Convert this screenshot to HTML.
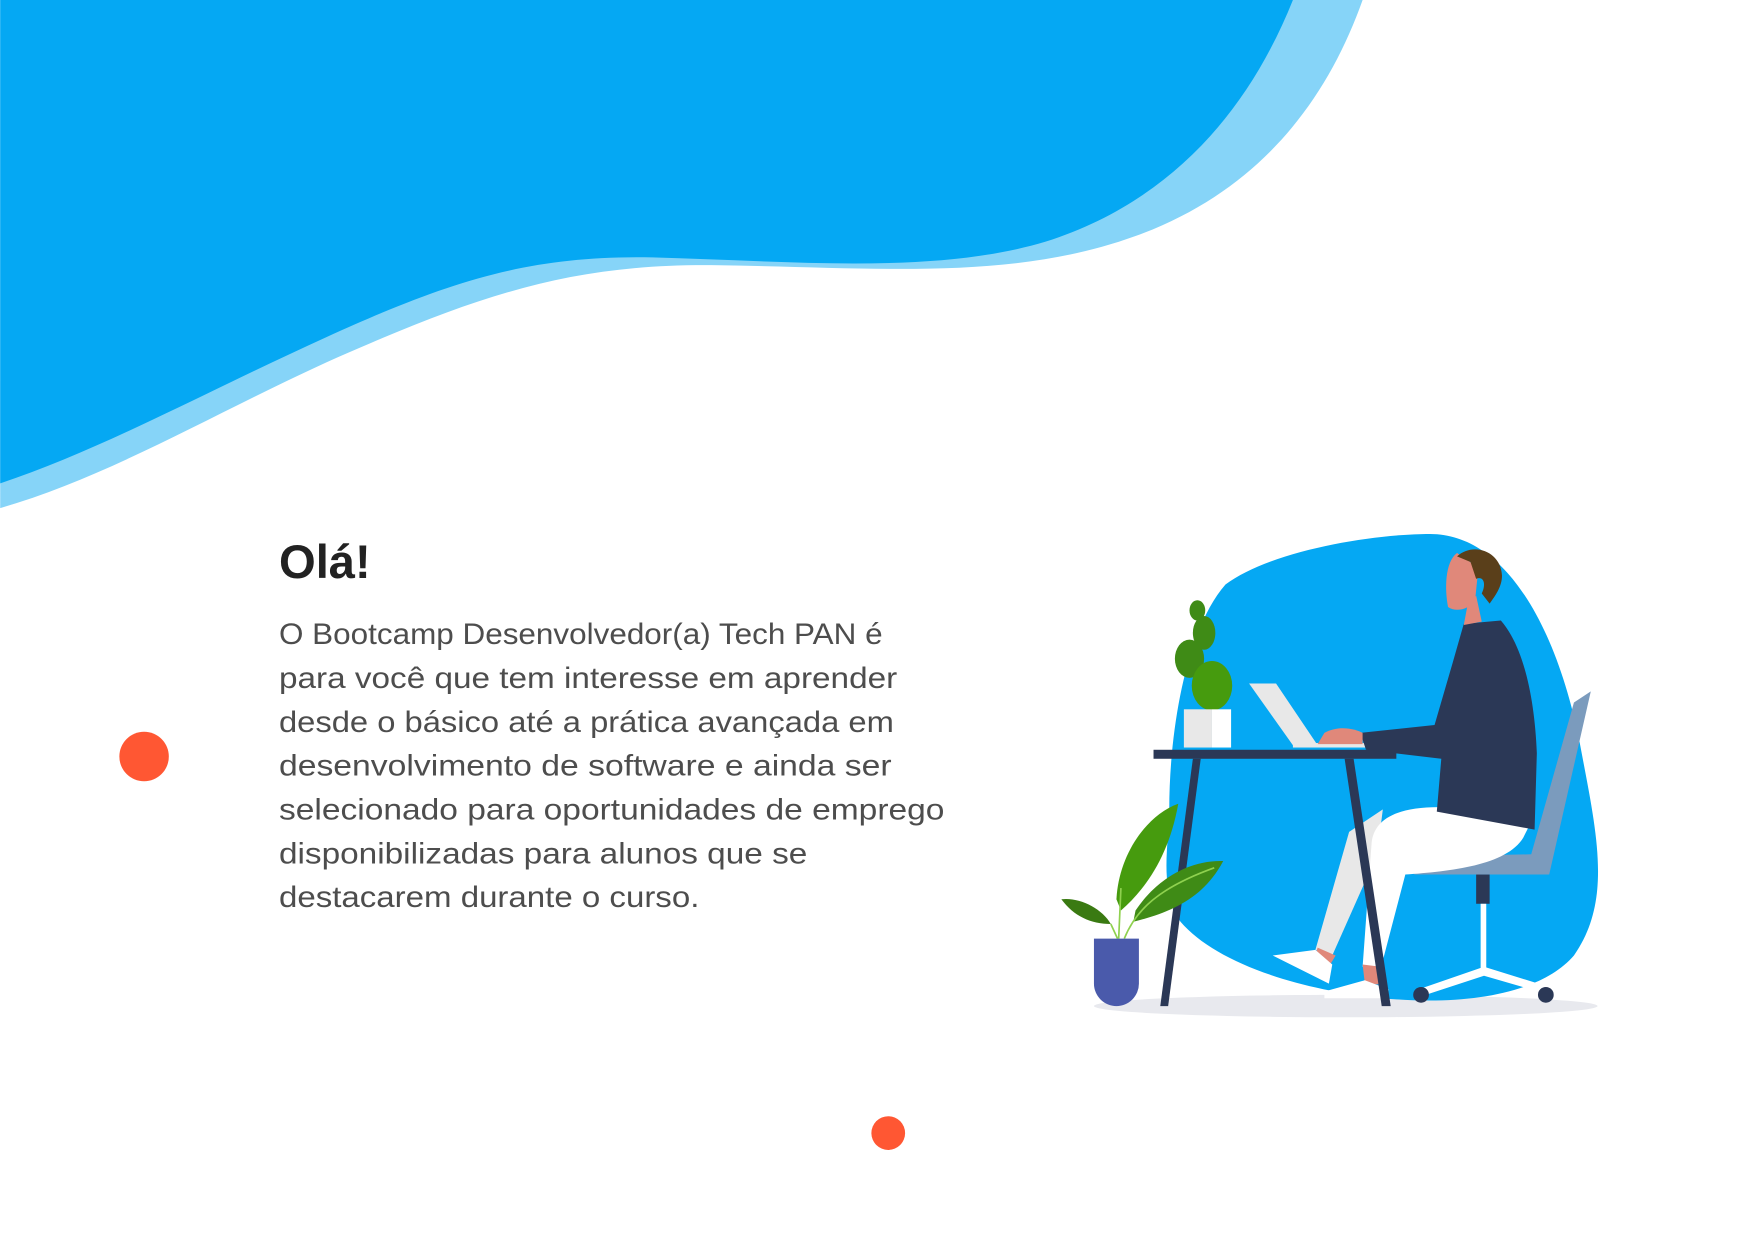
<!DOCTYPE html>
<html><head><meta charset="utf-8"><style>
html,body{margin:0;padding:0;background:#fff;overflow:hidden}
svg{display:block}
</style></head><body>
<svg width="1754" height="1241" viewBox="0 0 1560 1104" xmlns="http://www.w3.org/2000/svg">
<rect width="1560" height="1104" fill="#fff"/>
<path d="M0 0 H1212 C1180 90 1120 170 1010 210 C900 250 780 238 640 236 C520 234 440 258 330 305 C210 355 110 420 0 452 Z" fill="#86d4f8"/>
<path d="M0 0 H1150 C1110 100 1040 180 930 215 C830 245 700 232 580 229 C470 227 400 250 290 300 C180 350 90 400 0 430 Z" fill="#05a8f3"/>
<text x="248" y="514" font-family="Liberation Sans, sans-serif" font-weight="bold" font-size="42" fill="#222">Olá!</text>
<g font-family="Liberation Sans, sans-serif" font-size="26" fill="#4d4d4d">
<text x="248" y="573" textLength="537" lengthAdjust="spacingAndGlyphs">O Bootcamp Desenvolvedor(a) Tech PAN é</text>
<text x="248" y="612" textLength="550" lengthAdjust="spacingAndGlyphs">para você que tem interesse em aprender</text>
<text x="248" y="651" textLength="547" lengthAdjust="spacingAndGlyphs">desde o básico até a prática avançada em</text>
<text x="248" y="690" textLength="545" lengthAdjust="spacingAndGlyphs">desenvolvimento de software e ainda ser</text>
<text x="248" y="729" textLength="592" lengthAdjust="spacingAndGlyphs">selecionado para oportunidades de emprego</text>
<text x="248" y="768" textLength="470" lengthAdjust="spacingAndGlyphs">disponibilizadas para alunos que se</text>
<text x="248" y="807" textLength="374" lengthAdjust="spacingAndGlyphs">destacarem durante o curso.</text>
</g>
<circle cx="128" cy="673" r="22" fill="#ff5733"/>
<circle cx="790" cy="1008" r="15" fill="#ff5733"/>
<!-- illustration -->
<ellipse cx="1197" cy="895" rx="224" ry="10" fill="#e8e9ee"/>
<path d="M1272 475 C1340 475 1385 560 1405 660 C1420 740 1435 800 1400 850 C1370 885 1300 895 1230 888 C1150 880 1080 855 1050 820 C1030 790 1040 750 1040 720 C1040 650 1055 560 1090 520 C1130 490 1220 475 1272 475 Z" fill="#05a8f3"/>
<!-- chair -->
<path d="M1415 615 L1400 625 L1362 760 L1260 762 L1258 778 L1378 778 Z" fill="#7b9bbd"/>
<rect x="1313" y="778" width="12" height="26" fill="#2b3856"/>
<rect x="1317" y="804" width="5" height="58" fill="#fff"/>
<path d="M1320 860 L1262 880 L1265 886 L1320 868 L1375 884 L1378 878 Z" fill="#fff"/>
<circle cx="1264" cy="885" r="7" fill="#2b3856"/>
<circle cx="1375" cy="885" r="7" fill="#2b3856"/>
<!-- legs -->
<path d="M1230 720 L1200 740 L1170 845 L1185 850 L1225 760 Z" fill="#e8e8e8"/>
<path d="M1280 718 C1240 718 1222 730 1220 750 L1212 860 L1228 862 L1250 778 C1290 775 1340 770 1355 745 L1360 735 Z" fill="#fff"/>
<path d="M1172 843 L1188 850 L1182 860 L1168 855 Z" fill="#e0887a"/>
<path d="M1132 850 L1170 845 L1185 858 L1182 875 Z" fill="#fff"/>
<path d="M1212 858 L1228 860 L1232 876 L1214 875 Z" fill="#e0887a"/>
<path d="M1178 882 L1214 872 L1235 880 L1235 888 L1178 888 Z" fill="#fff"/>
<!-- desk -->
<rect x="1026" y="667" width="216" height="8" fill="#2b3856"/>
<path d="M1061 675 L1068 675 L1039 895 L1032 895 Z" fill="#2b3856"/>
<path d="M1196 675 L1204 675 L1237 895 L1229 895 Z" fill="#2b3856"/>
<!-- laptop -->
<path d="M1111 608 L1135 608 L1172 663 L1150 663 Z" fill="#e8e8e8"/>
<rect x="1150" y="661" width="85" height="4" fill="#e8e8e8"/>
<!-- torso -->
<path d="M1302 555 L1335 552 C1355 575 1365 620 1367 670 L1365 738 L1278 722 L1282 675 L1215 667 L1210 652 L1276 645 L1292 590 Z" fill="#2b3856"/>
<path d="M1178 652 C1190 645 1205 648 1212 652 L1212 662 L1172 662 Z" fill="#e0887a"/>
<!-- head -->
<path d="M1313 530 L1318 553 L1302 556 L1305 540 Z" fill="#e0887a"/>
<path d="M1296 492 C1285 500 1285 525 1288 540 C1295 545 1306 542 1312 535 L1315 505 Z" fill="#e0887a"/>
<path d="M1296 495 C1310 482 1335 490 1336 512 C1336 522 1330 530 1325 537 L1318 528 C1322 520 1320 512 1313 515 L1308 500 Z" fill="#5a3f1a"/>
<!-- cactus -->
<ellipse cx="1065" cy="543" rx="7" ry="9" fill="#3f8b16"/>
<ellipse cx="1071" cy="563" rx="10" ry="15" fill="#3f8b16"/>
<ellipse cx="1058" cy="586" rx="13" ry="17" fill="#3f8b16"/>
<ellipse cx="1078" cy="610" rx="18" ry="22" fill="#469b0e"/>
<rect x="1053" y="631" width="25" height="34" fill="#e8e8e8"/>
<rect x="1078" y="631" width="17" height="34" fill="#fff"/>
<!-- plant -->
<path d="M1048 715 C1020 725 995 760 993 800 L997 810 C1020 790 1040 760 1048 715 Z" fill="#469b0e"/>
<path d="M1088 766 C1060 765 1030 780 1010 810 L1008 820 C1040 812 1070 800 1088 766 Z" fill="#3f8b16"/>
<path d="M944 800 C960 798 980 808 988 822 C970 822 955 815 944 800 Z" fill="#3a7a12"/>
<path d="M995 835 L997 790 M1000 835 C1010 810 1030 790 1080 772 M988 822 L994 835" stroke="#8fd14f" stroke-width="1.5" fill="none"/>
<path d="M973 835 H1013 V875 A20 20 0 0 1 973 875 Z" fill="#4a5aab"/>
</svg>
</body></html>
